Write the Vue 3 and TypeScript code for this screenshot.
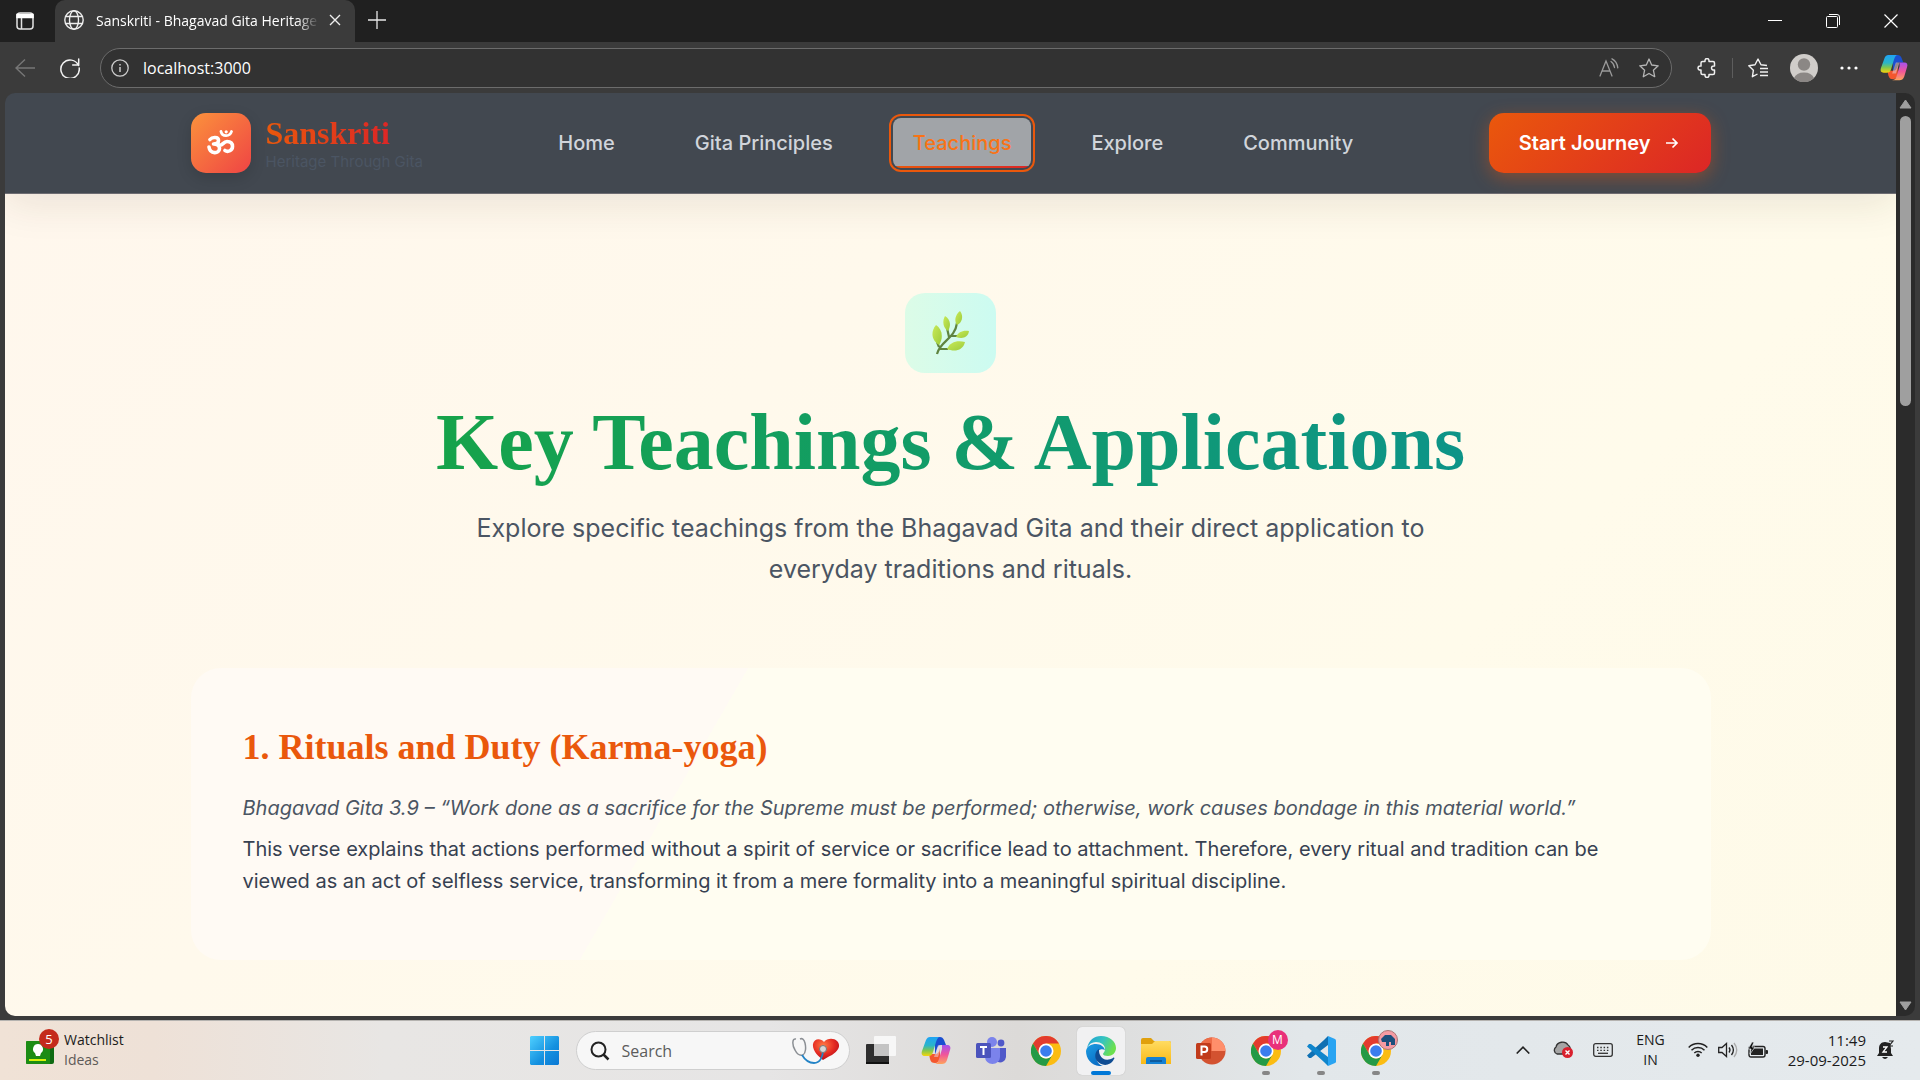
<script setup lang="ts">
import { ref } from 'vue'

interface NavItem {
  label: string
  href: string
}

interface TaskItem {
  id: string
  label: string
  active?: boolean
  running?: boolean
  badge?: 'm' | 'dog'
}

const address = ref('localhost:3000')
const query = ref('')
const current = ref('Teachings')

const navItems: NavItem[] = [
  { label: 'Home', href: '#home' },
  { label: 'Gita Principles', href: '#principles' },
  { label: 'Teachings', href: '#teachings' },
  { label: 'Explore', href: '#explore' },
  { label: 'Community', href: '#community' },
]

const tasks: TaskItem[] = [
  { id: 'taskview', label: 'Task view' },
  { id: 'copilot', label: 'Copilot' },
  { id: 'teams', label: 'Teams' },
  { id: 'chrome', label: 'Chrome' },
  { id: 'edge', label: 'Edge', active: true },
  { id: 'files', label: 'File Explorer' },
  { id: 'ppt', label: 'PowerPoint' },
  { id: 'chrome', label: 'Chrome, profile M', running: true, badge: 'm' },
  { id: 'vscode', label: 'Visual Studio Code', running: true },
  { id: 'chrome', label: 'Chrome, second profile', running: true, badge: 'dog' },
]
</script>

<template>
  <div class="desktop">
    <svg class="sprites" width="0" height="0" aria-hidden="true">
      <defs>
        <linearGradient id="cpA" x1="0" y1="0" x2="0" y2="1">
          <stop offset="0" stop-color="#1fa3f5" />
          <stop offset="0.45" stop-color="#2bb5c8" />
          <stop offset="0.7" stop-color="#7cc653" />
          <stop offset="1" stop-color="#f5d50a" />
        </linearGradient>
        <linearGradient id="cpB" x1="0" y1="0" x2="0" y2="1">
          <stop offset="0" stop-color="#a552ef" />
          <stop offset="0.5" stop-color="#f0559b" />
          <stop offset="1" stop-color="#ffa35c" />
        </linearGradient>
        <linearGradient id="edA" x1="0" y1="0" x2="1" y2="0.4">
          <stop offset="0" stop-color="#1f9fd8" />
          <stop offset="0.55" stop-color="#35c4c0" />
          <stop offset="1" stop-color="#6be04e" />
        </linearGradient>
        <linearGradient id="edB" x1="0" y1="0" x2="0.6" y2="1">
          <stop offset="0" stop-color="#1b9de2" />
          <stop offset="1" stop-color="#0a6cc4" />
        </linearGradient>
        <linearGradient id="folder" x1="0" y1="0" x2="0" y2="1">
          <stop offset="0" stop-color="#ffdc62" />
          <stop offset="1" stop-color="#f9b916" />
        </linearGradient>
        <linearGradient id="win" x1="0" y1="0" x2="1" y2="1">
          <stop offset="0" stop-color="#4fd0ff" />
          <stop offset="0.6" stop-color="#1490df" />
          <stop offset="1" stop-color="#0a78d4" />
        </linearGradient>
        <linearGradient id="leaf" x1="0" y1="0" x2="1" y2="1">
          <stop offset="0" stop-color="#c9ea58" />
          <stop offset="1" stop-color="#9ccb3b" />
        </linearGradient>
        <radialGradient id="heart" cx="0.4" cy="0.3" r="0.7">
          <stop offset="0" stop-color="#ff7a45" />
          <stop offset="0.6" stop-color="#e52b22" />
          <stop offset="1" stop-color="#b9101c" />
        </radialGradient>
      </defs>
      <symbol id="i-copilot" viewBox="0 0 30 30">
        <path d="M14 1h5c2 0 3 1 4 3l2 5h-5c-2 0-3 1-4 4l-2 6z" fill="#1b4fd0" />
        <path d="M8 18h6c3 0 4-2 5-6l0 10c-1 3-2 5-5 5-3 0-4-1-5-4z" fill="#f4572e" />
        <path d="M9 1h10c-2 0-3 2-4 5l-3 10c-1 3-2 4-5 4H4c-3 0-4-2-3-5L5 4c1-2 2-3 4-3z" fill="url(#cpA)" />
        <path d="M21 9h5c3 0 4 2 3 5l-3 10c-1 3-3 4-5 4h-8c3 0 4-2 5-5l3-10c0-2 0-3 0-4z" fill="url(#cpB)" />
        <path d="M17 9h4l-4 12h-4z" fill="#e9d5e6" opacity="0.5" />
      </symbol>
      <symbol id="i-taskview" viewBox="0 0 30 30">
        <rect x="0" y="8" width="23" height="20" rx="1" fill="#2e2e2e" />
        <rect x="0" y="26" width="23" height="2" fill="#111" />
        <rect x="8" y="0" width="22" height="20" rx="1" fill="#fafafa" opacity="0.9" />
        <rect x="8" y="8" width="15" height="12" fill="#c4c4c4" />
      </symbol>
      <symbol id="i-teams" viewBox="0 0 30 30">
        <circle cx="16" cy="6" r="5" fill="#7b83eb" />
        <circle cx="25" cy="7" r="3.4" fill="#5059c9" />
        <path d="M20 12h10v9a6 6 0 0 1-8 5z" fill="#5059c9" />
        <path d="M9 12h15v9a7.500 7 0 0 1-15 0z" fill="#7b83eb" />
        <rect x="0" y="7" width="15" height="15" rx="1.500" fill="#4b53bc" />
        <path d="M4 11h7M7.500 11v8" stroke="#fff" stroke-width="2" fill="none" />
      </symbol>
      <symbol id="i-chrome" viewBox="0 0 30 30">
        <circle cx="15" cy="15" r="15" fill="#fbbc12" />
        <path d="M2 7.500A15 15 0 0 1 28 7.500H15L8.500 18.700z" fill="#e33b2e" />
        <path d="M2 7.500A15 15 0 0 0 15 30l6.500-11.300A7.500 7.500 0 0 1 8.500 18.700z" fill="#249a46" />
        <circle cx="15" cy="15" r="7.500" fill="#fff" />
        <circle cx="15" cy="15" r="5.800" fill="#3b7ded" />
      </symbol>
      <symbol id="i-edge" viewBox="0 0 30 30">
        <path d="M1 12C3 4 8 0 15 0c9 0 15 6 15 12 0 5-4 8-8 8-3 0-5-1-5-2 0-1 2-2 2-5 0-4-4-7-9-7C6 6 3 8 1 12z" fill="url(#edA)" />
        <path d="M0 15C1 10 5 8 10 8c5 0 8 3 9 6-4-2-9 1-9 6 0 5 3 9 7 10C7 31 0 24 0 15z" fill="url(#edB)" />
        <path d="M13 13c-4 2-5 8-2 12 4 5 13 6 17-2 1-1 0-2-1-1-5 3-11 2-13-3-1-2-1-4-1-6z" fill="#104d93" />
      </symbol>
      <symbol id="i-files" viewBox="0 0 30 30">
        <path d="M0 4a2 2 0 0 1 2-2h8l3 3h15a2 2 0 0 1 2 2v4H0z" fill="#e0a00d" />
        <path d="M0 8h11l3-3h14a2 2 0 0 1 2 2v21H0z" fill="url(#folder)" />
        <path d="M5 28v-5a2 2 0 0 1 2-2h16a2 2 0 0 1 2 2v5z" fill="#1481d4" />
        <path d="M9 25h12" stroke="#0a4f8e" stroke-width="1.500" />
      </symbol>
      <symbol id="i-ppt" viewBox="0 0 30 30">
        <circle cx="16" cy="15" r="13.500" fill="#d35230" />
        <path d="M16 1.500A13.500 13.500 0 0 1 29.500 15H16z" fill="#ff8f6b" />
        <path d="M16 1.500A13.500 13.500 0 0 0 2.500 15H16z" fill="#ed6c47" />
        <rect x="0" y="7" width="15" height="16" rx="1.500" fill="#c13b1b" />
        <path d="M5.500 19.500v-9h3a2.500 2.500 0 0 1 0 5.500h-3" stroke="#fff" stroke-width="2" fill="none" />
      </symbol>
      <symbol id="i-vscode" viewBox="0 0 30 30">
        <path d="M22 0l-4 4L1 19.500l2 2.500h2L22 9z" fill="#0f70b3" />
        <path d="M22 30l-4-4L1 10.500 3 8h2l17 13z" fill="#0f85cc" />
        <path d="M22 0l7 3q1 .5 1 1.500v21q0 1-1 1.500l-7 3z" fill="#29a4f2" />
      </symbol>
    </svg>

    <header class="browser">
      <div class="tabs">
        <button class="chrome-btn workspace" aria-label="Tab actions">
          <svg width="18" height="18" viewBox="0 0 18 18" fill="none" stroke="#e2e2e2" stroke-width="1.5">
            <rect x="1" y="1" width="16" height="16" rx="3" />
            <path d="M1 2.500h16v3H1z" fill="#fff" stroke="#fff" />
            <path d="M5.500 6v11" />
          </svg>
        </button>
        <div class="tab">
          <svg width="20" height="20" viewBox="0 0 20 20" fill="none" stroke="#eee" stroke-width="1.400">
            <circle cx="10" cy="10" r="9.200" />
            <ellipse cx="10" cy="10" rx="4.500" ry="9.200" />
            <path d="M2 6.500h16M2 13.500h16" />
          </svg>
          <span class="tab-title">Sanskriti - Bhagavad Gita Heritage</span>
          <button class="chrome-btn" aria-label="Close tab">
            <svg width="12" height="12" viewBox="0 0 12 12" stroke="#eee" stroke-width="1.400"><path d="M1 1l10 10M11 1L1 11" /></svg>
          </button>
        </div>
        <button class="chrome-btn new-tab" aria-label="New tab">
          <svg width="18" height="18" viewBox="0 0 18 18" stroke="#e8e8e8" stroke-width="1.300"><path d="M9 0v18M0 9h18" /></svg>
        </button>
        <div class="window-controls">
          <button class="chrome-btn" aria-label="Minimize">
            <svg width="14" height="14" viewBox="0 0 14 14" stroke="#fff"><path d="M0 6.500h14" /></svg>
          </button>
          <button class="chrome-btn" aria-label="Restore">
            <svg width="14" height="14" viewBox="0 0 14 14" fill="none" stroke="#fff"><rect x="0.500" y="2.500" width="11" height="11" rx="1" /><path d="M3 .5h8a2.500 2.500 0 0 1 2.500 2.500v8" /></svg>
          </button>
          <button class="chrome-btn" aria-label="Close">
            <svg width="14" height="14" viewBox="0 0 14 14" stroke="#fff" stroke-width="1.200"><path d="M.5.5l13 13M13.500.5l-13 13" /></svg>
          </button>
        </div>
      </div>

      <div class="toolbar">
        <button class="chrome-btn" aria-label="Back">
          <svg width="20" height="18" viewBox="0 0 20 18" fill="none" stroke="#777" stroke-width="1.400"><path d="M20 9H1M10 0.500L1 9l9 8.500" /></svg>
        </button>
        <button class="chrome-btn" aria-label="Refresh">
          <svg width="20" height="20" viewBox="0 0 20 20" fill="none" stroke="#f2f2f2" stroke-width="1.500" stroke-linecap="round"><path d="M18.500 7.500A9.200 9.200 0 1 0 19.200 10M18.700 1v6h-6" /></svg>
        </button>
        <div class="address">
          <svg width="18" height="18" viewBox="0 0 18 18" fill="none" stroke="#ccc" stroke-width="1.300"><circle cx="9" cy="9" r="8.200" /><path d="M9 8v5M9 5v1.500" stroke-width="1.500" /></svg>
          <input v-model="address" class="url" type="text" aria-label="Address" />
          <button class="chrome-btn" aria-label="Read aloud">
            <svg width="20" height="20" viewBox="0 0 20 20" fill="none" stroke="#9b9b9b" stroke-width="1.300" stroke-linecap="round"><path d="M1 18L7 3l6 15M3 13h8M12 3.500q3 2 3.500 6M13 .8q5 2.500 5.800 9" /></svg>
          </button>
          <button class="chrome-btn" aria-label="Add to favorites">
            <svg width="20" height="20" viewBox="0 0 20 20" fill="none" stroke="#b5b5b5" stroke-width="1.300" stroke-linejoin="round"><path d="M10 1l2.700 6 6.500.8-4.800 4.400 1.300 6.500L10 15.500l-5.700 3.200 1.300-6.500L.8 7.800 7.300 7z" /></svg>
          </button>
        </div>
        <div class="tools">
          <button class="chrome-btn" aria-label="Extensions">
            <svg width="20" height="20" viewBox="0 0 20 20" fill="none" stroke="#f0f0f0" stroke-width="1.500" stroke-linejoin="round"><path d="M5.500 3.500H8c-.5-4 4.500-4 4 0h4q1.500 0 1.500 1.500v3c-4-.7-4 4.700 0 4v3q0 1.500-1.500 1.500h-4c.5 4-4.500 4-4 0H5.500Q4 16.500 4 15v-3c-4 .7-4-4.700 0-4V5q0-1.500 1.500-1.500z" /></svg>
          </button>
          <span class="divider"></span>
          <button class="chrome-btn" aria-label="Favorites">
            <svg width="20" height="20" viewBox="0 0 20 20" fill="none" stroke="#f0f0f0" stroke-width="1.400" stroke-linejoin="round"><path d="M19 7.500l-6-.7L10 1 7 6.800.8 7.800l4.600 4.400-1 6.500L9.500 16M12 10.500h8M12 14h8M12 17.500h8" /></svg>
          </button>
          <button class="chrome-btn" aria-label="Profile">
            <svg width="28" height="28" viewBox="0 0 28 28"><circle cx="14" cy="14" r="14" fill="#d0cdca" /><circle cx="14" cy="10.500" r="6.200" fill="#8b8785" /><path d="M4 24a10.500 8 0 0 1 20 0 14 14 0 0 1-20 0z" fill="#8b8785" /></svg>
          </button>
          <button class="chrome-btn" aria-label="More">
            <svg width="18" height="6" viewBox="0 0 18 6" fill="#fff"><circle cx="2" cy="3" r="1.600" /><circle cx="9" cy="3" r="1.600" /><circle cx="16" cy="3" r="1.600" /></svg>
          </button>
          <button class="chrome-btn" aria-label="Copilot"><svg width="28" height="28"><use href="#i-copilot" /></svg></button>
        </div>
      </div>
    </header>

    <div class="viewport">
      <div class="page">
        <div class="site-header">
          <div class="container bar">
            <a class="brand" href="#home">
              <span class="logo">
                <svg width="28" height="26" viewBox="0 0 28 26" fill="none" stroke="#fff" stroke-width="3.600" stroke-linecap="round" stroke-linejoin="round">
                  <path d="M3 9.500c2-2.500 8.500-3 8.500 1 0 2.500-2.500 3.500-5 3.500 3.500 0 6 1.200 6 4.500 0 5.500-9.500 6-10.500-1.500M12 15c3.500 1.500 4-3.500 8-3.500 3 0 5.500 1.500 5.500 5 0 4-4.500 6-7.500 4" />
                  <path d="M14 1.500c1 5.500 9 5.500 10.500 0" stroke-width="2.800" />
                  <circle cx="19.200" cy="1.800" r="1.600" fill="#fff" stroke="none" />
                </svg>
              </span>
              <span class="brand-text">
                <strong>Sanskriti</strong>
                <small>Heritage Through Gita</small>
              </span>
            </a>
            <nav>
              <a
                v-for="item in navItems"
                :key="item.label"
                :href="item.href"
                :class="{ current: item.label === current }"
                @click="current = item.label"
              >{{ item.label }}</a>
            </nav>
            <button class="cta">
              Start Journey
              <svg width="14" height="12" viewBox="0 0 14 12" fill="none" stroke="#fff" stroke-width="1.700"><path d="M1 6h11M7.500 1.500L12 6l-4.500 4.500" /></svg>
            </button>
          </div>
        </div>

        <div class="content">
          <main class="container">
            <section class="hero">
              <span class="leaf">
                <svg width="38" height="44" viewBox="0 0 38 44">
                  <path d="M5 43C8 30 23 28 25 12M7 36L5 31M8 38l8 0M17 26l-2-9M18 25l9 0" fill="none" stroke="#5f8440" stroke-width="2.200" />
                  <g fill="url(#leaf)">
                    <path d="M28 0c4 5 2 12-3 14-3-4-2-10 3-14z" />
                    <path d="M13 5c6 4 6 10 3 15-5-3-6-10-3-15z" />
                    <path d="M4 14c6 4 8 12 3 20-7-4-9-13-3-20z" />
                    <path d="M37 20c-1 7-7 8-13 6 2-5 7-7 13-6z" />
                    <path d="M33 31c-2 9-11 10-18 7 3-7 10-9 18-7z" />
                  </g>
                </svg>
              </span>
              <h1>Key Teachings &amp; Applications</h1>
              <p>Explore specific teachings from the Bhagavad Gita and their direct application to everyday traditions and rituals.</p>
            </section>

            <article class="card">
              <h2>1. Rituals and Duty (Karma-yoga)</h2>
              <p class="quote">Bhagavad Gita 3.9 – “Work done as a sacrifice for the Supreme must be performed; otherwise, work causes bondage in this material world.”</p>
              <p class="body">This verse explains that actions performed without a spirit of service or sacrifice lead to attachment. Therefore, every ritual and tradition can be viewed as an act of selfless service, transforming it from a mere formality into a meaningful spiritual discipline.</p>
            </article>
          </main>
        </div>
      </div>
      <div class="scrollbar" aria-hidden="true">
        <svg width="13" height="10" viewBox="0 0 13 10"><path d="M6.500 1L12 9H1z" fill="#9f9f9f" stroke="#9f9f9f" stroke-linejoin="round" /></svg>
        <div class="track"><div class="thumb"></div></div>
        <svg width="13" height="10" viewBox="0 0 13 10"><path d="M6.500 9L12 1H1z" fill="#9f9f9f" stroke="#9f9f9f" stroke-linejoin="round" /></svg>
      </div>
    </div>

    <footer class="taskbar">
      <button class="widget">
        <span class="widget-icon">
          <svg width="28" height="24" viewBox="0 0 28 24">
            <rect width="28" height="23" rx="2" fill="#0f6b12" /><rect width="24" height="23" rx="1" fill="#1c8c14" />
            <rect x="3" y="18" width="17" height="2" fill="#d7f20b" />
            <path d="M12 3a5 5 0 0 1 3 9l-1 3h-4l-1-3a5 5 0 0 1 3-9z" fill="#fff" />
          </svg>
          <span class="count">5</span>
        </span>
        <span class="widget-text"><span>Watchlist</span><span class="muted">Ideas</span></span>
      </button>

      <div class="dock">
        <button class="task" aria-label="Start">
          <svg width="29" height="29" viewBox="0 0 29 29" fill="url(#win)"><path d="M1 0h13v14H0V1zM15 0h13l1 1v13H15zM0 15h14v14H1l-1-1zM15 15h14v13l-1 1H15z" /></svg>
        </button>
        <label class="search">
          <svg width="20" height="20" viewBox="0 0 20 20" fill="none" stroke="#222" stroke-width="2"><circle cx="8.500" cy="8.500" r="7" /><path d="M13.500 13.500l5 5" stroke-width="2.500" /></svg>
          <input v-model="query" type="text" placeholder="Search" aria-label="Search" />
          <svg width="48" height="28" viewBox="0 0 48 28" fill="none">
            <path d="M31 23C27 20 20 14 21 7c1-6 8-6 11-2 3-4 10-4 13-1 5 5 0 11-5 14-4 2-6 3-9 5z" fill="url(#heart)" />
            <path d="M4 2C0 1 0 8 3 13c2 4 5 6 8 5 3-2 3-8 2-12-1-4-3-5-5-4" stroke="#8b8f94" stroke-width="1.500" />
            <path d="M10 18c3 5 7 8 12 8 6 0 9-6 9-13" stroke="#2484c6" stroke-width="1.800" />
            <circle cx="31" cy="12" r="3.500" fill="#d7d7d7" stroke="#777" />
          </svg>
        </label>
        <button
          v-for="(task, index) in tasks"
          :key="index"
          class="task"
          :class="{ active: task.active, running: task.running }"
          :aria-label="task.label"
        >
          <svg width="30" height="30"><use :href="'#i-' + task.id" /></svg>
          <span v-if="task.badge === 'm'" class="badge">M</span>
          <span v-else-if="task.badge === 'dog'" class="badge dog">
            <svg width="14" height="12" viewBox="0 0 14 12"><path d="M0 5l4-4h6l4 4v6h-4V8H8v4H5V8L1 8z" fill="#1c4f7c" /></svg>
          </span>
        </button>
      </div>

      <div class="tray">
        <svg width="14" height="8" viewBox="0 0 14 8" fill="none" stroke="#222" stroke-width="1.600"><path d="M.7 7.500L7 1.200l6.300 6.300" /></svg>
        <svg class="cloud" width="20" height="17" viewBox="0 0 20 17"><path d="M4 13a4 4 0 0 1-1-7c1-5 9-7 12-2 2 1 3 4 2 9z" fill="#a5a5a5" stroke="#333" stroke-width="1.300" /><circle cx="14.500" cy="11.500" r="5.500" fill="#d9202d" /><path d="M12.500 9.500l4 4M16.500 9.500l-4 4" stroke="#fff" stroke-width="1.400" /></svg>
        <svg width="20" height="14" viewBox="0 0 20 14" fill="none" stroke="#333" stroke-width="1.300"><rect x=".7" y=".7" width="18.600" height="12.600" rx="2" /><path d="M4 4.500h12M4 7.300h12" stroke-dasharray="1.500 1.800" /><path d="M5 10.300h10" /></svg>
        <div class="lang">ENG<br />IN</div>
        <div class="status">
          <svg width="20" height="15" viewBox="0 0 20 15" fill="none" stroke="#222" stroke-width="1.500"><path d="M.7 5.500a13 13 0 0 1 18.600 0M3.500 8.300a9.200 9.200 0 0 1 13 0M6.300 11a5.300 5.300 0 0 1 7.400 0" /><circle cx="10" cy="13.200" r="1.700" fill="#222" stroke="none" /></svg>
          <svg width="20" height="16" viewBox="0 0 20 16" fill="none" stroke="#222" stroke-width="1.300"><path d="M.7 5.500v5H4l4.500 4V1.500L4 5.500zM11 5.500q2 2.500 0 5M13.500 3q3.800 5 0 10" /><path d="M16 1q5.500 7 0 14" stroke="#aaa" /></svg>
          <svg width="20" height="16" viewBox="0 0 20 16"><rect x="1" y="4.500" width="16" height="10.500" rx="2" fill="none" stroke="#222" stroke-width="1.400" /><rect x="3" y="6.500" width="12" height="6.500" fill="#222" /><rect x="17.500" y="8" width="2.500" height="4" rx="1" fill="#222" /><path d="M4 0L0 7h3l-1 5 5-7H4l2-5z" fill="#111" stroke="#e4e9ec" stroke-width=".7" /></svg>
        </div>
        <div class="clock">11:49<br />29-09-2025</div>
        <svg width="17" height="20" viewBox="0 0 17 20"><path d="M8 2C4 2 2 5 2 8v5l-2 3h16l-2-3V9l-1-6z" fill="#222" /><path d="M5 17h6q-3 4-6 0z" fill="#222" /><path d="M6 7h4l-4 5h4" fill="none" stroke="#fff" stroke-width="1.300" /><path d="M12 1h4l-4 5h4" fill="none" stroke="#222" stroke-width="1.200" /></svg>
      </div>
    </footer>
  </div>
</template>

<style>
body {
  margin: 0;
  background: #3b3b3b;
}
</style>

<style scoped>
* {
  box-sizing: border-box;
}
.desktop {
  display: flex;
  flex-direction: column;
  height: 100vh;
  overflow: hidden;
  background: #3b3b3b;
  font-family: 'Open Sans', 'Noto Sans', sans-serif;
}
.sprites {
  position: absolute;
}
button {
  font: inherit;
  color: inherit;
  border: 0;
  background: none;
  padding: 0;
}
svg {
  display: block;
  flex: none;
}
.chrome-btn {
  display: flex;
  align-items: center;
  justify-content: center;
}

/* Browser frame */
.tabs {
  display: flex;
  align-items: stretch;
  height: 42px;
  background: #202020;
}
.workspace {
  width: 55px;
  padding-right: 5px;
}
.tab {
  display: flex;
  align-items: center;
  width: 300px;
  padding: 0 14px 2px 9px;
  background: #3b3b3b;
  border-radius: 10px 10px 0 0;
}
.tab-title {
  flex: 1;
  margin: 0 10px 0 12px;
  overflow: hidden;
  white-space: nowrap;
  font-size: 14px;
  color: #fff;
  mask-image: linear-gradient(90deg, #000 90%, transparent);
}
.new-tab {
  margin-left: 13px;
  padding-bottom: 3px;
}
.window-controls {
  display: flex;
  gap: 44px;
  margin-left: auto;
  padding-right: 22px;
}
.toolbar {
  display: flex;
  align-items: center;
  height: 51px;
  padding: 0 12px 0 15px;
  gap: 25px;
}
.address {
  flex: 1;
  display: flex;
  align-items: center;
  height: 40px;
  margin-left: -5px;
  padding: 0 12px 0 10px;
  gap: 20px;
  border: 1px solid #6c6c6c;
  border-radius: 20px;
  background: #323232;
}
.url {
  flex: 1;
  min-width: 0;
  margin-left: -6px;
  padding: 0;
  border: 0;
  outline: 0;
  background: none;
  color: #fff;
  font: 16px 'Open Sans', 'Noto Sans', sans-serif;
}
.tools {
  display: flex;
  align-items: center;
  gap: 22px;
}
.divider {
  width: 1px;
  height: 20px;
  margin: 0 -7px;
  background: #5d5d5d;
}

/* Web page */
.viewport {
  flex: 1;
  display: flex;
  min-height: 0;
  margin: 0 5px 4px;
}
.page {
  flex: 1;
  display: flex;
  flex-direction: column;
  overflow: hidden;
  border-radius: 10px 0 0 10px;
  font-family: Inter, 'Liberation Sans', sans-serif;
}
.content {
  flex: 1;
  background: linear-gradient(135deg, #fff7ed 0%, #fffbeb 70%, #fefae8 100%);
}
.container {
  width: 100%;
  max-width: 1600px;
  margin: 0 auto;
  padding: 0 40px;
}
.site-header {
  position: relative;
  flex: none;
  height: 101px;
  border-bottom: 1px solid #6d6c72;
  background: #424850;
  box-shadow: 0 10px 40px rgba(60, 40, 20, 0.1);
}
.bar {
  display: flex;
  align-items: center;
  justify-content: space-between;
  height: 100%;
}
.brand {
  display: flex;
  align-items: center;
  gap: 15px;
  text-decoration: none;
}
.logo {
  display: grid;
  place-items: center;
  width: 60px;
  height: 60px;
  border-radius: 15px;
  background: linear-gradient(135deg, #fb923c, #ef4444);
  box-shadow: 0 5px 15px rgba(0, 0, 0, 0.14);
}
.brand-text {
  display: flex;
  flex-direction: column;
}
.brand strong {
  align-self: flex-start;
  font: bold 32px/38px 'Liberation Serif', serif;
  background: linear-gradient(90deg, #ea580c, #dc2626);
  background-clip: text;
  color: transparent;
}
.brand small {
  font-size: 15px;
  line-height: 20px;
  color: #4b5563;
}
nav {
  display: flex;
  gap: 40px;
}
nav a {
  height: 50px;
  padding: 0 20px;
  border-radius: 8px;
  font-size: 20px;
  font-weight: 500;
  line-height: 50px;
  color: #d1d5db;
  text-decoration: none;
}
nav a.current {
  color: #f97316;
  background: linear-gradient(90deg, #ea580c, #dc2626) bottom / 100% 2px no-repeat, #a1a4a8;
  outline: 2px solid #ea580c;
  outline-offset: 2px;
}
.cta {
  display: flex;
  align-items: center;
  gap: 14px;
  height: 60px;
  padding: 0 32px 0 30px;
  border-radius: 15px;
  background: linear-gradient(135deg, #ea580c, #dc2626);
  box-shadow: 0 5px 18px rgba(234, 88, 12, 0.4);
  font-size: 20px;
  font-weight: 600;
  color: #fff;
}
.hero {
  display: flex;
  flex-direction: column;
  align-items: center;
  padding: 99px 0 78px;
  text-align: center;
}
.leaf {
  display: grid;
  place-items: center;
  width: 91px;
  height: 80px;
  border-radius: 20px;
  background: linear-gradient(90deg, #dcfce7, #ccfbf1);
}
h1 {
  margin: 22px 0 18px;
  font: bold 80px/95px 'Liberation Serif', serif;
  background: linear-gradient(90deg, #16a34a, #0d9488);
  background-clip: text;
  color: transparent;
}
.hero p {
  max-width: 960px;
  margin: 0;
  font-size: 25px;
  line-height: 41px;
  color: #4b5563;
}
.card {
  padding: 52px 52px 54px;
  border-radius: 30px;
  background: linear-gradient(120deg, #fffaf4 33%, #fffdf1 33%);
}
h2 {
  margin: 0 0 18px;
  font: bold 36px/54px 'Liberation Serif', serif;
  color: #ea580c;
}
.card p {
  margin: 0 0 9px;
  font-size: 20px;
  line-height: 32px;
}
.card .quote {
  font-style: italic;
  color: #4b5563;
}
.card .body {
  color: #374151;
}
.scrollbar {
  display: flex;
  flex-direction: column;
  align-items: center;
  width: 19px;
  padding: 6px 0 5px;
  border-radius: 0 10px 10px 0;
  background: #2b2b2b;
}
.track {
  flex: 1;
  padding: 7px 0;
}
.thumb {
  width: 11px;
  height: 33%;
  border-radius: 6px;
  background: #9f9f9f;
}

/* Taskbar */
.taskbar {
  display: grid;
  grid-template-columns: 1fr auto 1fr;
  align-items: center;
  height: 60px;
  border-top: 1px solid #b5b3b0;
  background: linear-gradient(90deg, #f0e2d6 0%, #eee1d7 8%, #e8e6e4 20%, #e6e5e5 40%, #dcdad8 53%, #e2e7ea 68%, #e5eaed 100%);
  color: #1b1b1b;
}
.widget {
  display: flex;
  align-items: center;
  gap: 10px;
  padding: 0 0 2px 26px;
  text-align: left;
}
.widget-icon {
  position: relative;
  padding-top: 6px;
}
.count {
  position: absolute;
  top: -6px;
  left: 13px;
  width: 20px;
  height: 20px;
  border-radius: 50%;
  background: #c42b1c;
  color: #fff;
  font-size: 13px;
  line-height: 20px;
  text-align: center;
}
.widget-text {
  display: flex;
  flex-direction: column;
  font-size: 14px;
  line-height: 20px;
}
.muted {
  color: #5e5a57;
}
.dock {
  display: flex;
  align-items: center;
  gap: 7px;
}
.task {
  position: relative;
  display: grid;
  place-items: center;
  width: 48px;
  height: 48px;
  border-radius: 5px;
}
.task.active {
  background: #f1f1f2;
  box-shadow: 0 0 1px #aaa;
}
.task.active::after,
.task.running::after {
  content: '';
  position: absolute;
  bottom: 0;
  width: 8px;
  height: 4px;
  border-radius: 2px;
  background: #868686;
}
.task.active::after {
  width: 20px;
  background: #0078d7;
}
.badge {
  position: absolute;
  top: 3px;
  right: 2px;
  display: grid;
  place-items: center;
  width: 20px;
  height: 20px;
  border-radius: 50%;
  background: #e9317a;
  color: #fff;
  font-size: 12px;
}
.badge.dog {
  background: #f59aa2;
  border: 1px solid #a77;
}
.search {
  display: flex;
  align-items: center;
  width: 274px;
  height: 39px;
  padding: 0 9px 0 13px;
  border: 1px solid #cfcfcf;
  border-radius: 20px;
  background: #f7f7f7;
}
.search input {
  flex: 1;
  min-width: 0;
  padding: 0 0 0 12px;
  border: 0;
  outline: 0;
  background: none;
  font: 16px 'Open Sans', 'Noto Sans', sans-serif;
}
.search input::placeholder {
  color: #5c5c5c;
  opacity: 1;
}
.tray {
  display: flex;
  align-items: center;
  justify-content: flex-end;
  padding: 0 26px 2px 0;
  font-size: 14px;
  line-height: 20px;
}
.cloud {
  margin: 0 20px 0 23px;
}
.lang {
  margin: 0 23px;
  text-align: center;
}
.status {
  display: flex;
  align-items: center;
  gap: 10px;
}
.clock {
  margin: 0 11px 0 20px;
  font-size: 15px;
  text-align: right;
}
</style>
